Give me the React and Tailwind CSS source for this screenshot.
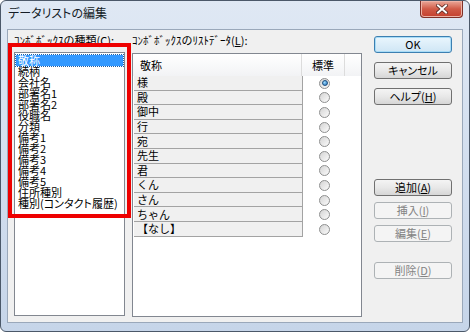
import React from "react";

const categories = [
  "敬称",
  "続柄",
  "会社名",
  "部署名1",
  "部署名2",
  "役職名",
  "分類",
  "備考1",
  "備考2",
  "備考3",
  "備考4",
  "備考5",
  "住所種別",
  "種別(コンタクト履歴)",
];

const honorifics = ["様", "殿", "御中", "行", "宛", "先生", "君", "くん", "さん", "ちゃん", "【なし】"];

function Radio({ checked }) {
  return (
    <span className="flex h-[11px] w-[11px] items-center justify-center rounded-full border border-[#8e8f8f] bg-linear-to-br from-[#d4d4d4] to-[#fbfbfb]">
      {checked && (
        <span className="h-[6px] w-[6px] rounded-full border border-[#1c4f80] bg-[radial-gradient(circle_at_35%_35%,#9edcff,#1a6bb5)]" />
      )}
    </span>
  );
}

function Btn({ children, kind = "normal" }) {
  const base =
    "flex h-[17px] w-[78px] items-center justify-center rounded-[3px] border text-[11px] leading-none [font-feature-settings:'palt']";
  if (kind === "default") {
    return (
      <div className={`${base} border-[#3c7fb1] bg-linear-to-b from-[#eaf6fd] to-[#cfe6f5] text-black shadow-[inset_0_0_0_1px_#a8dcf7]`}>
        {children}
      </div>
    );
  }
  if (kind === "disabled") {
    return <div className={`${base} border-[#adb2b5] bg-[#f4f4f4] text-[#838383]`}>{children}</div>;
  }
  return (
    <div className={`${base} border-[#707070] bg-linear-to-b from-[#f4f4f4] via-[#e8e8e8] to-[#d6d6d6] text-black`}>
      {children}
    </div>
  );
}

export default function App() {
  return (
    <div className="relative h-[332px] w-[470px] overflow-hidden bg-white font-['Noto_Sans_CJK_JP',sans-serif] text-black">
      <div className="flex h-[332px] w-[470px] flex-col rounded-[6px] border border-[#4b5869] bg-linear-to-b from-[#dfe8f4] to-[#c6d5e9]">
        {/* Title bar */}
        <div className="flex h-[28px] shrink-0 items-start justify-between pl-[7px] pr-[6px]">
          <span className="mt-[5px] text-[12px] leading-[14px] text-[#141c26] [font-feature-settings:'palt']">
            データリストの編集
          </span>
          <div className="flex h-[17px] w-[43px] items-center justify-center rounded-b-[4px] border border-t-0 border-[#7f3128] bg-linear-to-b from-[#e9a799] via-[#d05a46] to-[#c4402e] shadow-[inset_0_0_0_1px_#eeb3a6]">
            <svg width="12" height="10" viewBox="0 0 12 10">
              <path d="M2 1.5 L10 8.5 M10 1.5 L2 8.5" stroke="#5a2a24" strokeWidth="3.6" strokeLinecap="square" />
              <path d="M2 1.5 L10 8.5 M10 1.5 L2 8.5" stroke="#ffffff" strokeWidth="2" strokeLinecap="square" />
            </svg>
          </div>
        </div>

        {/* Client area */}
        <div className="mx-[6px] flex h-[294px] shrink-0 border border-[#9aa8ba] bg-[#f0f0f0] pl-[6px] pt-[3px] text-[11px]">
          {/* Category list */}
          <div className="flex w-[111px] flex-col">
            <div className="h-[14px] whitespace-nowrap leading-[14px]">ｺﾝﾎﾞﾎﾞｯｸｽの種類(<span className="underline">C</span>):</div>
            <div className="mt-[5px] h-[264px] border border-[#828790] bg-white pt-[2px]">
              {categories.map((c, i) => (
                <div
                  key={c}
                  className={
                    i === 0
                      ? "mx-[1px] h-[11px] whitespace-nowrap bg-[#3399ff] pl-[2px] text-[11px] leading-[11px] text-white outline-1 outline-dotted outline-[#1c5fa8]"
                      : "mx-[1px] h-[11px] whitespace-nowrap pl-[2px] text-[11px] leading-[11px] [font-feature-settings:'palt']"
                  }
                >
                  {c}
                </div>
              ))}
            </div>
          </div>

          {/* List data grid */}
          <div className="ml-[7px] flex w-[230px] flex-col">
            <div className="h-[14px] whitespace-nowrap leading-[14px]">ｺﾝﾎﾞﾎﾞｯｸｽのﾘｽﾄﾃﾞｰﾀ(<span className="underline">L</span>):</div>
            <div className="mt-[6px] h-[264px] border border-[#828790] bg-white">
              <div className="flex h-[22px] bg-linear-to-b from-white to-[#f2f3f5]">
                <div className="flex w-[169px] items-center border-r border-[#dcdcdc] pl-[7px]">敬称</div>
                <div className="flex w-[43px] items-center justify-center border-r border-[#dcdcdc]">標準</div>
                <div className="flex-1" />
              </div>
              {honorifics.map((h, i) => (
                <div key={h} className="flex h-[14.6px]">
                  <div className="ml-[1px] flex w-[169px] items-center border-b border-r border-[#a3a3a3] bg-[#f0f0f0] pl-[3px] leading-none">
                    {h}
                  </div>
                  <div className="flex w-[43px] items-center justify-center">
                    <Radio checked={i === 0} />
                  </div>
                </div>
              ))}
            </div>
          </div>

          {/* Buttons */}
          <div className="ml-[12px] flex w-[78px] flex-col pt-[3px]">
            <Btn kind="default">OK</Btn>
            <div className="mt-[9px]">
              <Btn>キャンセル</Btn>
            </div>
            <div className="mt-[9px]">
              <Btn>
                ヘルプ(<span className="underline">H</span>)
              </Btn>
            </div>
            <div className="mt-[74px]">
              <Btn>
                追加(<span className="underline">A</span>)
              </Btn>
            </div>
            <div className="mt-[6px]">
              <Btn kind="disabled">
                挿入(<span className="underline">I</span>)
              </Btn>
            </div>
            <div className="mt-[6px]">
              <Btn kind="disabled">
                編集(<span className="underline">E</span>)
              </Btn>
            </div>
            <div className="mt-[20px]">
              <Btn kind="disabled">
                削除(<span className="underline">D</span>)
              </Btn>
            </div>
          </div>
        </div>
      </div>

      {/* Red annotation box */}
      <div className="pointer-events-none absolute left-[8px] top-[43px] h-[175px] w-[123px] border-4 border-[#ee0000]" />
    </div>
  );
}
